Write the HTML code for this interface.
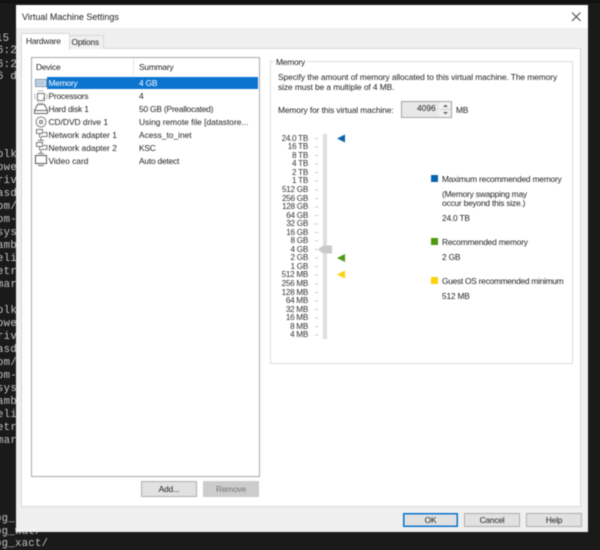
<!DOCTYPE html>
<html><head><meta charset="utf-8"><style>
html,body{margin:0;padding:0}
body{width:600px;height:548px;background:#1a1a1a;overflow:hidden;position:relative;font-family:"Liberation Sans",sans-serif;font-size:8.4px;letter-spacing:-.2px;color:#222}
#root{position:absolute;left:0;top:0;width:600px;height:548px;filter:blur(.4px)}
.a{position:absolute;white-space:nowrap;line-height:12px}
.b{position:absolute}
.t{font-family:"Liberation Mono",monospace;font-size:10.6px;color:#c4c4c4;letter-spacing:.3px}
.btn{position:absolute;box-sizing:border-box;text-align:center;background:#e1e1e1;border:1px solid #adadad;color:#222}
.lab{position:absolute;right:292px;white-space:nowrap;line-height:10px;font-size:8.2px;letter-spacing:-.3px;color:#333}
</style></head><body><div id="root">
<div class="b" style="left:0;top:0;width:600px;height:3px;background:#111"></div>
<div class="a t" style="left:-4px;top:32.500px">15</div>
<div class="a t" style="left:-3px;top:44.500px">6:2</div>
<div class="a t" style="left:-3px;top:58.500px">6:2</div>
<div class="a t" style="left:-3px;top:71px">6 d</div>
<div class="a t" style="left:-3px;top:149px">olk</div>
<div class="a t" style="left:-3px;top:162px">owe</div>
<div class="a t" style="left:-3px;top:175px">riv</div>
<div class="a t" style="left:-3px;top:188px">asd</div>
<div class="a t" style="left:-3px;top:201px">om/</div>
<div class="a t" style="left:-3px;top:214px">om-</div>
<div class="a t" style="left:-3px;top:227px">sys</div>
<div class="a t" style="left:-3px;top:240px">amb</div>
<div class="a t" style="left:-3px;top:253px">eli</div>
<div class="a t" style="left:-3px;top:266px">etr</div>
<div class="a t" style="left:-3px;top:279px">mar</div>
<div class="a t" style="left:-3px;top:305px">olk</div>
<div class="a t" style="left:-3px;top:318px">owe</div>
<div class="a t" style="left:-3px;top:331px">riv</div>
<div class="a t" style="left:-3px;top:344px">asd</div>
<div class="a t" style="left:-3px;top:357px">om/</div>
<div class="a t" style="left:-3px;top:370px">om-</div>
<div class="a t" style="left:-3px;top:383px">sys</div>
<div class="a t" style="left:-3px;top:396px">amb</div>
<div class="a t" style="left:-3px;top:409px">eli</div>
<div class="a t" style="left:-3px;top:422px">etr</div>
<div class="a t" style="left:-3px;top:435px">mar</div>
<div class="a t" style="left:-5px;top:513px">og_</div>
<div class="a t" style="left:-5px;top:526px">og_wat/</div>
<div class="a t" style="left:-5px;top:538px">og_xact/</div>

<div class="b" style="left:16px;top:5px;width:572px;height:527px;background:#efefef"></div>
<div class="b" style="left:16px;top:5px;width:572px;height:23px;background:#fff"></div>
<div class="a" style="left:22px;top:11px;font-size:9px;letter-spacing:0">Virtual Machine Settings</div>
<svg class="b" style="left:571px;top:11px" width="11" height="11"><path d="M1 1.500L9.500 10M9.500 1.500L1 10" stroke="#444" stroke-width="1" fill="none"/></svg>

<div class="b" style="left:21px;top:48px;width:558px;height:457px;background:#fff;border:1px solid #d9d9d9"></div>
<div class="b" style="left:69px;top:35px;width:33px;height:13px;background:#f0f0f0;border:1px solid #d9d9d9;border-bottom:0"></div>
<div class="b" style="left:21px;top:33px;width:47px;height:16px;background:#fff;border:1px solid #d9d9d9;border-bottom:0"></div>
<div class="a" style="left:26px;top:34.500px">Hardware</div>
<div class="a" style="left:71.500px;top:36px">Options</div>

<div class="b" style="left:31px;top:57px;width:227px;height:418px;background:#fff;border:1px solid #a8a8b4"></div>
<div class="b" style="left:133px;top:58px;width:1px;height:18px;background:#e5e5e5"></div>
<div class="a" style="left:36px;top:61px">Device</div>
<div class="a" style="left:139px;top:61px">Summary</div>
<div class="b" style="left:47px;top:77px;width:211px;height:12px;background:#0a74cf"></div>
<div class="a" style="left:48.500px;top:77.300px;color:#fff">Memory</div>
<div class="a" style="left:139px;top:77.300px;color:#fff">4 GB</div>
<div class="a" style="left:48.500px;top:90.300px">Processors</div><div class="a" style="left:139px;top:90.300px">4</div>
<div class="a" style="left:48.500px;top:103.300px">Hard disk 1</div><div class="a" style="left:139px;top:103.300px">50 GB (Preallocated)</div>
<div class="a" style="left:48.500px;top:116px;letter-spacing:0">CD/DVD drive 1</div><div class="a" style="left:139px;top:116px;letter-spacing:0">Using remote file [datastore...</div>
<div class="a" style="left:48.500px;top:129px;letter-spacing:0">Network adapter 1</div><div class="a" style="left:139px;top:129px;letter-spacing:0">Acess_to_inet</div>
<div class="a" style="left:48.500px;top:142px;letter-spacing:0">Network adapter 2</div><div class="a" style="left:139px;top:142px">KSC</div>
<div class="a" style="left:48.500px;top:155px;letter-spacing:0">Video card</div><div class="a" style="left:139px;top:155px">Auto detect</div>

<svg class="b" style="left:34px;top:76px" width="14" height="92" fill="none" stroke="#666" stroke-width="1">
<rect x="1.500" y="3.500" width="11" height="7" fill="#cfe0f0" stroke="#7d93a8"/><path d="M3 6h8M3 8h8" stroke="#6f8aa5" stroke-dasharray="1 1"/>
<rect x="3.500" y="17.500" width="7" height="7" stroke="#777"/><path d="M1 18v1M1 20v1M1 22v1M13 18v1M13 20v1M13 22v1M4 15h1M6 15h1M8 15h1M4 27h1M6 27h1M8 27h1" stroke="#777"/><path d="M9 22h1v1" stroke="#777"/>
<path d="M3.500 28.500h7l3 6v3h-13v-3z"/><path d="M1 34.500h12"/>
<circle cx="7" cy="46" r="5" stroke="#888"/><circle cx="7" cy="46" r="1.500"/>
<path d="M2.500 53.500h6v4h-6zM5.500 58v3.500M9.500 56.500h3.500v4h-6M4 64.500h6M7 61v3" stroke="#777"/>
<path d="M2.500 66.500h6v4h-6zM5.500 71v3.500M9.500 69.500h3.500v4h-6M4 77.500h6M7 74v3" stroke="#777"/>
<rect x="1.500" y="79.500" width="11" height="8" stroke="#555"/><path d="M4 89.500h6"/>
</svg>

<div class="btn" style="left:141px;top:481px;width:56px;height:16px;line-height:14px">Add...</div>
<div class="btn" style="left:203px;top:481px;width:56px;height:16px;line-height:14px;background:#ccc;border-color:#ccc;color:#777">Remove</div>

<div class="b" style="left:270px;top:61px;width:301px;height:301px;border:1px solid #dcdcdc"></div>
<div class="a" style="left:275px;top:56px;background:#fff;padding:0 2px 0 1px">Memory</div>
<div class="a" style="left:278px;top:70.500px;letter-spacing:-.07px">Specify the amount of memory allocated to this virtual machine. The memory</div>
<div class="a" style="left:278px;top:81px;letter-spacing:-.07px">size must be a multiple of 4 MB.</div>
<div class="a" style="left:278px;top:104px;letter-spacing:-.1px">Memory for this virtual machine:</div>
<div class="b" style="left:401px;top:101px;width:49px;height:15px;background:#e8e8e8;border:1px solid #a5a5a5"></div>
<div class="b" style="left:439px;top:102px;width:11px;height:15px;background:#f2f2f2"></div>
<div class="a" style="left:417px;top:102px;letter-spacing:0">4096</div>
<svg class="b" style="left:440px;top:103px" width="10" height="13"><path d="M3 4L5.500 1.500 8 4z" fill="#666"/><path d="M3 9l2.500 2.500L8 9z" fill="#666"/><path d="M0 6.500h10" stroke="#ccc"/></svg>
<div class="a" style="left:456px;top:104px">MB</div>

<div class="lab" style="top:133.500px">24.0 TB</div><div class="lab" style="top:142px">16 TB</div><div class="lab" style="top:150.500px">8 TB</div><div class="lab" style="top:159px">4 TB</div><div class="lab" style="top:167.500px">2 TB</div><div class="lab" style="top:176px">1 TB</div><div class="lab" style="top:185px">512 GB</div><div class="lab" style="top:193.500px">256 GB</div><div class="lab" style="top:202px">128 GB</div><div class="lab" style="top:210.500px">64 GB</div><div class="lab" style="top:219px">32 GB</div><div class="lab" style="top:227.500px">16 GB</div><div class="lab" style="top:236px">8 GB</div><div class="lab" style="top:244.500px">4 GB</div><div class="lab" style="top:253px">2 GB</div><div class="lab" style="top:261.500px">1 GB</div><div class="lab" style="top:270px">512 MB</div><div class="lab" style="top:279px">256 MB</div><div class="lab" style="top:287.500px">128 MB</div><div class="lab" style="top:296px">64 MB</div><div class="lab" style="top:304.500px">32 MB</div><div class="lab" style="top:313px">16 MB</div><div class="lab" style="top:321.500px">8 MB</div><div class="lab" style="top:330px">4 MB</div>
<svg class="b" style="left:315px;top:130px" width="35" height="212">
<path d="M0 8.500h3M0 17h3M0 25.500h3M0 34h3M0 42.500h3M0 51h3M0 60h3M0 68.500h3M0 77h3M0 85.500h3M0 94h3M0 102.500h3M0 111h3M0 119.500h3M0 128h3M0 136.500h3M0 145h3M0 154h3M0 162.500h3M0 171h3M0 179.500h3M0 188h3M0 196.500h3M0 205h3" stroke="#ccc"/>
<rect x="8" y="4" width="4" height="205" fill="#dedede"/>
<path d="M3 119.500L8 115.500h9v8H8z" fill="#c9c9c9"/>
<path d="M22 8.500L30 4.500v8z" fill="#0a64ad"/>
<path d="M22 128L30 124v8z" fill="#4e9a10"/>
<path d="M22 144.500L30 140.500v8z" fill="#fcd20a"/>
</svg>

<div class="b" style="left:431px;top:175px;width:7px;height:7px;background:#0a64ad"></div>
<div class="a" style="left:442px;top:173px">Maximum recommended memory</div>
<div class="a" style="left:442px;top:187.500px">(Memory swapping may</div>
<div class="a" style="left:442px;top:197px">occur beyond this size.)</div>
<div class="a" style="left:442px;top:211.500px">24.0 TB</div>
<div class="b" style="left:431px;top:238px;width:7px;height:7px;background:#4e9a10"></div>
<div class="a" style="left:442px;top:236px">Recommended memory</div>
<div class="a" style="left:442px;top:251px">2 GB</div>
<div class="b" style="left:431px;top:277px;width:7px;height:7px;background:#fcd20a"></div>
<div class="a" style="left:442px;top:275px;letter-spacing:-.27px">Guest OS recommended minimum</div>
<div class="a" style="left:442px;top:290px">512 MB</div>

<div class="btn" style="left:403px;top:513px;width:55px;height:14px;line-height:12px;border-color:#0a74cf;box-shadow:inset 0 0 0 .5px #0a74cf">OK</div>
<div class="btn" style="left:464px;top:513px;width:56px;height:14px;line-height:12px">Cancel</div>
<div class="btn" style="left:526px;top:513px;width:56px;height:14px;line-height:12px">Help</div>
</div></body></html>
